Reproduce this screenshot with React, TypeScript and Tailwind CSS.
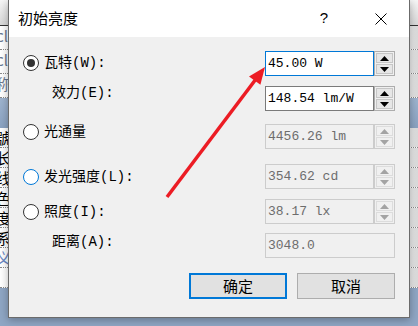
import type { ReactNode } from 'react';

const MONO = "font-['Liberation_Mono','Noto_Sans_CJK_SC',monospace]";

const TOP_ROWS = ['cla', 'cla', '称'];
const LOW_ROWS = ['號', '长', '线', '色', '度', '系', '义', ''];

function BgRow({ text, h, tone = 'text-black' }: { text: string; h: string; tone?: string }) {
    return (
        <div className={`flex ${h} border-b border-dotted border-[#8a8a8a] bg-white`}>
            <div className={`-ml-[4px] flex-1 overflow-hidden text-[15px] leading-[20px] ${tone} font-['Noto_Sans_CJK_SC',sans-serif]`}>
                {text}
            </div>
            <div className="w-[9px] bg-gradient-to-r from-[#efefef] to-[#d9d9d9]" />
        </div>
    );
}

function Radio({ checked = false, focus = false }: { checked?: boolean; focus?: boolean }) {
    return (
        <span
            className={`flex size-[16px] shrink-0 items-center justify-center rounded-full border bg-white ${
                focus ? 'border-[#0078d7]' : 'border-[#333333]'
            }`}
        >
            {checked && <span className="size-[8px] rounded-full bg-[#333333]" />}
        </span>
    );
}

function Tri({ up, color }: { up: boolean; color: string }) {
    return (
        <svg width="9" height="5" viewBox="0 0 9 5">
            <polygon points={up ? '4.5,0 9,5 0,5' : '0,0 9,0 4.5,5'} fill={color} />
        </svg>
    );
}

function Spin({ disabled = false }: { disabled?: boolean }) {
    const arrow = disabled ? '#a3a3a3' : '#000000';
    const btn = disabled ? 'bg-[#f0f0f0] border-[#dcdcdc]' : 'bg-[#e6e6e6] border-[#c6c6c6]';
    return (
        <div
            className={`flex w-[21px] flex-col gap-[1px] border p-[1px] ${
                disabled ? 'border-[#cccccc]' : 'border-[#adadad]'
            } bg-[#f0f0f0]`}
        >
            <div className={`flex flex-1 items-center justify-center border ${btn}`}>
                <Tri up color={arrow} />
            </div>
            <div className={`flex flex-1 items-center justify-center border ${btn}`}>
                <Tri up={false} color={arrow} />
            </div>
        </div>
    );
}

function Field({
    value,
    state = 'normal',
    spin = true,
    className = '',
}: {
    value: string;
    state?: 'focus' | 'normal' | 'disabled';
    spin?: boolean;
    className?: string;
}) {
    const box =
        state === 'focus'
            ? 'border-[#0078d7] bg-white text-black'
            : state === 'normal'
              ? 'border-[#7a7a7a] bg-white text-black'
              : 'border-[#cccccc] bg-[#f0f0f0] text-[#6d6d6d]';
    return (
        <div className={`flex h-[25px] ${className}`}>
            <div
                className={`flex ${spin ? 'w-[109px]' : 'w-[130px]'} items-center border pl-[2px] text-[13px] ${MONO} ${box}`}
            >
                {value}
            </div>
            {spin && <Spin disabled={state === 'disabled'} />}
        </div>
    );
}

function Label({ children, className = '' }: { children: ReactNode; className?: string }) {
    return (
        <div className={`flex h-[20px] items-center gap-[5px] text-[14px] text-black ${MONO} ${className}`}>
            {children}
        </div>
    );
}

function Button({ children, primary = false }: { children: ReactNode; primary?: boolean }) {
    return (
        <div
            className={`flex h-[26px] w-[98px] items-center justify-center bg-[#e1e1e1] text-[15px] text-black font-['Noto_Sans_CJK_SC',sans-serif] ${
                primary ? 'border-2 border-[#0078d7]' : 'border border-[#adadad]'
            }`}
        >
            {children}
        </div>
    );
}

export default function App() {
    return (
        <div className="relative h-[326px] w-[418px] overflow-hidden bg-[#8fa6c4]">
            {/* window behind the dialog */}
            <div className="flex flex-col">
                <div className="h-[26px] border-b border-[#333333] bg-gradient-to-b from-[#f6f6f6] to-[#d8d8d8]" />
                {TOP_ROWS.map((t, i) => (
                    <BgRow key={i} text={t} h="h-[24px]" tone="text-[#6a7890]" />
                ))}
                <div className="h-[30px] bg-gradient-to-b from-[#9fb4cf] to-[#8aa2c1]" />
                {LOW_ROWS.map((t, i) => (
                    <BgRow key={i} text={t} h="h-[20px]" tone={i === 6 ? 'text-[#6a86c2]' : 'text-black'} />
                ))}
            </div>

            {/* dialog */}
            <div className="absolute top-0 left-[8px] flex h-[318px] w-[402px] flex-col border-x border-b border-[#6b6b6b] bg-[#f0f0f0] shadow-[0_2px_8px_rgba(0,0,0,0.3)]">
                <div className="flex h-[37px] shrink-0 items-center bg-white pl-[9px]">
                    <span className="text-[15px] text-black font-['Noto_Sans_CJK_SC',sans-serif]">初始亮度</span>
                    <span className="ml-auto text-[15px] text-black font-['Liberation_Sans',sans-serif]">?</span>
                    <svg className="mr-[22px] ml-[47px]" width="12" height="12" viewBox="0 0 12 12">
                        <path d="M0.5 0.5 L11.5 11.5 M11.5 0.5 L0.5 11.5" stroke="#000" strokeWidth="1" />
                    </svg>
                </div>

                <div className="flex justify-between pr-[14px] pl-[14px]">
                    <div className="flex flex-col">
                        <Label className="mt-[16px]">
                            <Radio checked />
                            瓦特(W):
                        </Label>
                        <Label className="mt-[10px] ml-[29px]">效力(E):</Label>
                        <Label className="mt-[19px]">
                            <Radio />
                            光通量
                        </Label>
                        <Label className="mt-[25px]">
                            <Radio focus />
                            发光强度(L):
                        </Label>
                        <Label className="mt-[15px]">
                            <Radio />
                            照度(I):
                        </Label>
                        <Label className="mt-[10px] ml-[29px]">距离(A):</Label>
                    </div>
                    <div className="flex flex-col">
                        <Field className="mt-[14px]" value="45.00 W" state="focus" />
                        <Field className="mt-[10px]" value="148.54 lm/W" />
                        <Field className="mt-[13px]" value="4456.26 lm" state="disabled" />
                        <Field className="mt-[15px]" value="354.62 cd" state="disabled" />
                        <Field className="mt-[10px]" value="38.17 lx" state="disabled" />
                        <Field className="mt-[9px]" value="3048.0" state="disabled" spin={false} />
                    </div>
                </div>

                <div className="mt-[15px] flex justify-end gap-[10px] pr-[14px]">
                    <Button primary>确定</Button>
                    <Button>取消</Button>
                </div>
            </div>

            {/* annotation arrow */}
            <svg className="pointer-events-none absolute inset-0" width="418" height="326" viewBox="0 0 418 326">
                <line x1="167" y1="197" x2="256" y2="79" stroke="#ec1c24" strokeWidth="3.5" />
                <polygon points="265,67 249,76.4 260.4,84.8" fill="#ec1c24" />
            </svg>
        </div>
    );
}
